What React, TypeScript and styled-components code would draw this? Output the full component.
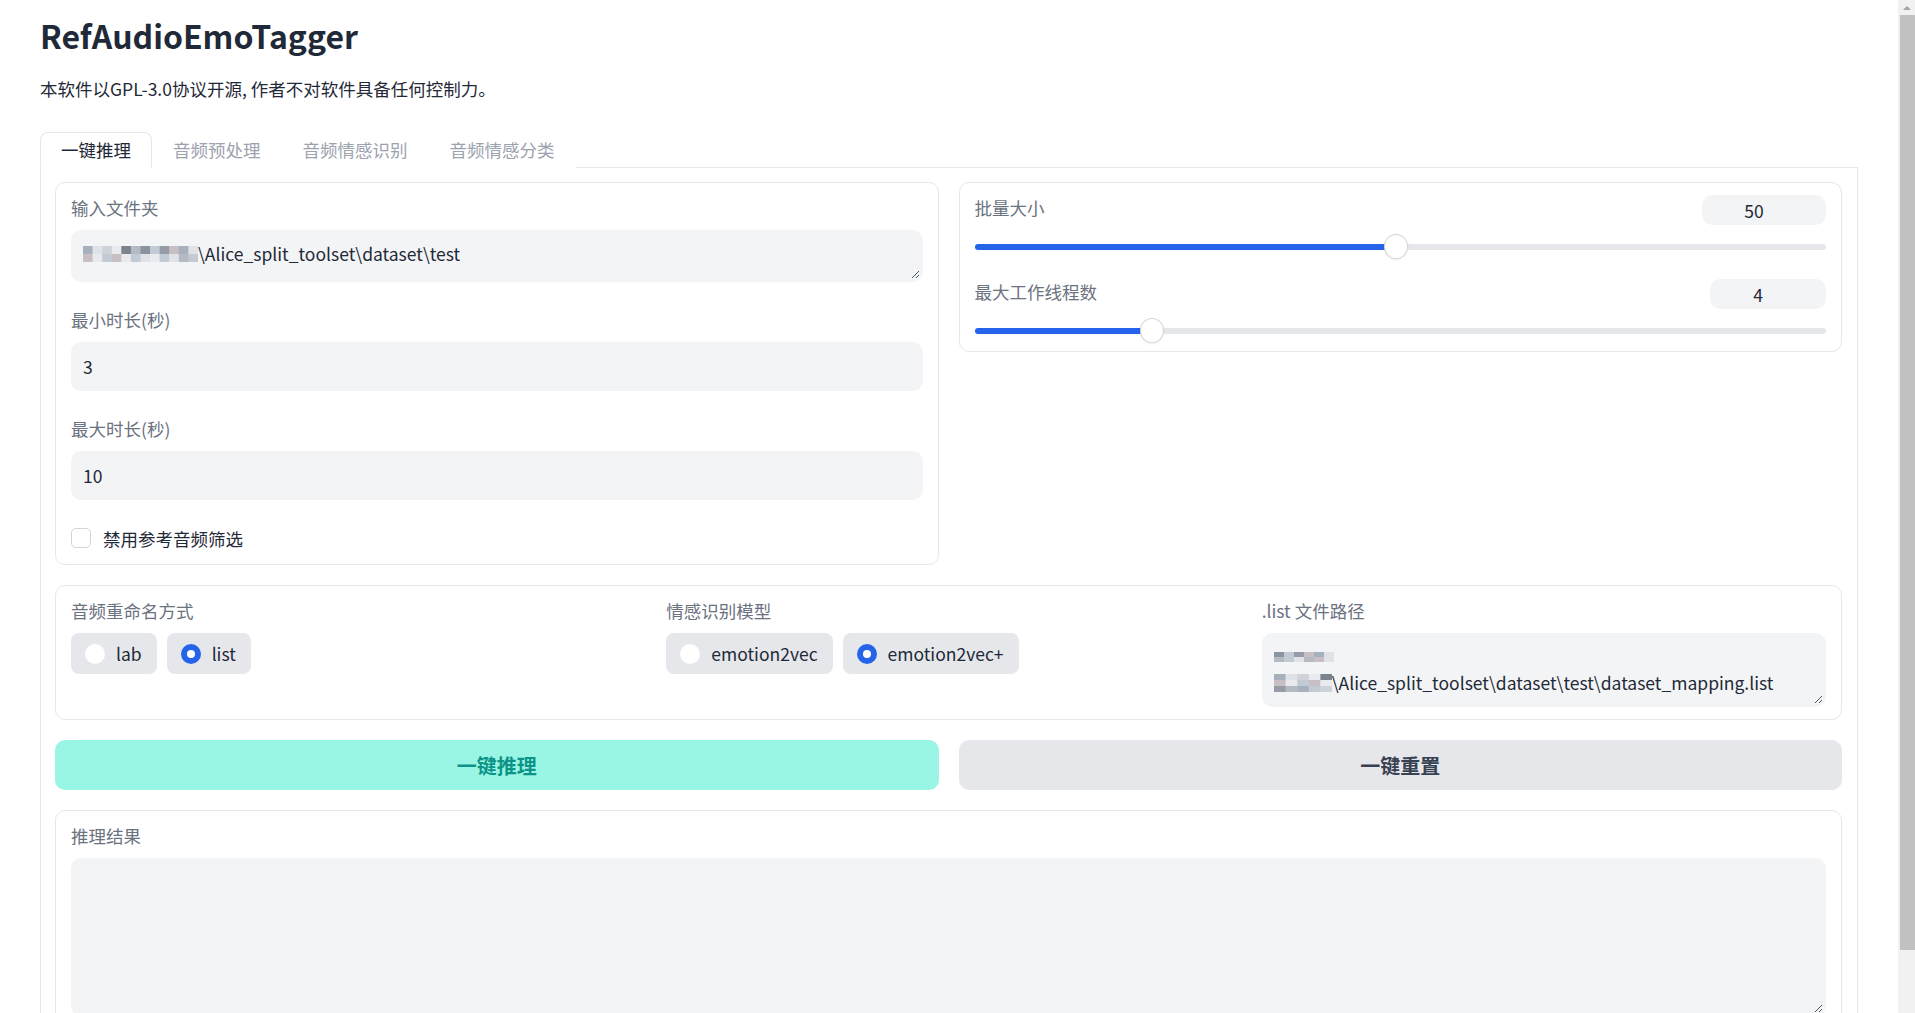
import React from 'react';
import styled, { createGlobalStyle } from 'styled-components';

const GlobalStyle = createGlobalStyle`
  * { box-sizing: border-box; }
  html, body { margin: 0; height: 100%; overflow: hidden; }
  body {
    background: #ffffff;
    color: #1f2937;
    font-family: "Noto Sans CJK SC", "Noto Sans", sans-serif;
  }
`;

const Shell = styled.div`
  display: flex;
  height: 100vh;
  overflow: hidden;
`;

const Main = styled.div`
  flex: 1;
  min-width: 0;
  overflow: hidden;
`;

const ScrollTrack = styled.div`
  width: 17px;
  flex: none;
  background: #f1f1f1;
  display: flex;
  flex-direction: column;
`;

const ScrollUp = styled.div`
  height: 15px;
  display: flex;
  align-items: center;
  justify-content: center;
`;

const ScrollThumb = styled.div`
  height: 935px;
  margin-left: 2px;
  background: #c1c1c1;
`;

const Page = styled.div`
  padding: 0 40px 24px;
`;

const Title = styled.h1`
  margin: 15px 0 0;
  font-size: 32px;
  line-height: 40px;
  font-weight: 700;
  color: #1f2937;
`;

const Subtitle = styled.p`
  margin: 21px 0 0;
  font-size: 17.5px;
  line-height: 26px;
  color: #1f2937;
`;

const TabNav = styled.div`
  margin-top: 30px;
  display: flex;
  border-bottom: 1px solid #e5e7eb;
`;

const Tab = styled.button<{ $active?: boolean }>`
  height: 36px;
  padding: 0 20px;
  margin-bottom: -1px;
  font-family: inherit;
  font-size: 17.5px;
  line-height: 26px;
  background: #ffffff;
  color: ${(p) => (p.$active ? '#1f2937' : '#9ca3af')};
  border: 1px solid ${(p) => (p.$active ? '#e5e7eb' : 'transparent')};
  border-bottom-color: ${(p) => (p.$active ? '#ffffff' : 'transparent')};
  border-radius: 8px 8px 0 0;
  cursor: pointer;
`;

const TabPanel = styled.div`
  border: 1px solid #e5e7eb;
  border-top: none;
  padding: 14px 15px 14px 14px;
  display: flex;
  flex-direction: column;
  gap: 20px;
`;

const TwoCols = styled.div`
  display: grid;
  grid-template-columns: 1fr 1fr;
  gap: 20px;
  align-items: start;
`;

const Card = styled.div<{ $pb?: number }>`
  border: 1px solid #e5e7eb;
  border-radius: 10px;
  padding: 12px 15px ${(p) => p.$pb ?? 12}px;
  display: flex;
  flex-direction: column;
  background: #ffffff;
`;

const Stack = styled.div<{ $gap: number }>`
  display: flex;
  flex-direction: column;
  gap: ${(p) => p.$gap}px;
`;

const Field = styled.div`
  display: flex;
  flex-direction: column;
  min-width: 0;
`;

const Label = styled.span`
  font-size: 17.5px;
  line-height: 26px;
  color: #6b7280;
  margin-bottom: 9px;
`;

const InputBox = styled.div<{ $h: number }>`
  position: relative;
  height: ${(p) => p.$h}px;
  background: #f3f4f6;
  border-radius: 10px;
  padding: 0 12px;
  display: flex;
  align-items: center;
  font-size: 17.5px;
  line-height: 26px;
  color: #1f2937;
`;

const AreaBox = styled.div<{ $h: number }>`
  position: relative;
  height: ${(p) => p.$h}px;
  background: #f3f4f6;
  border-radius: 10px;
  padding: 11px 12px;
  font-size: 17.5px;
  line-height: 26px;
  color: #1f2937;
  white-space: nowrap;
  overflow: hidden;
`;

const AreaLine = styled.div`
  display: flex;
  align-items: center;
  height: 26px;
`;

const GripMark = styled.svg`
  position: absolute;
  right: 3px;
  bottom: 3px;
`;

const CheckRow = styled.label`
  display: flex;
  align-items: center;
  gap: 12px;
  height: 26px;
  font-size: 17.5px;
  color: #1f2937;
`;

const CheckBox = styled.span`
  width: 20px;
  height: 20px;
  border: 1px solid #d1d5db;
  border-radius: 5px;
  background: #ffffff;
`;

const SliderHead = styled.div`
  display: flex;
  justify-content: space-between;
  align-items: flex-start;
`;

const SliderLabel = styled.span`
  font-size: 17.5px;
  line-height: 26px;
  color: #6b7280;
`;

const SliderNumber = styled.div<{ $w: number }>`
  width: ${(p) => p.$w}px;
  height: 30px;
  background: #f3f4f6;
  border-radius: 10px;
  padding: 0 24px 0 4px;
  display: flex;
  align-items: center;
  justify-content: center;
  font-size: 17.5px;
  color: #1f2937;
`;

const SliderWrap = styled.div`
  position: relative;
  height: 25px;
  margin-top: 9px;
  display: flex;
  align-items: center;
`;

const Rail = styled.div`
  width: 100%;
  height: 6px;
  border-radius: 3px;
  background: #e5e7eb;
  overflow: hidden;
`;

const RailFill = styled.div`
  height: 100%;
  background: #2563eb;
`;

const Thumb = styled.span`
  position: absolute;
  top: 0;
  width: 24px;
  height: 25px;
  margin-left: -12px;
  border-radius: 50%;
  background: #ffffff;
  border: 1px solid #d1d5db;
  box-shadow: 0 1px 2px rgba(0, 0, 0, 0.08);
`;

const ThreeCols = styled.div`
  display: grid;
  grid-template-columns: 1fr 1fr 1fr;
  column-gap: 31px;
`;

const PillRow = styled.div`
  display: flex;
  gap: 10px;
`;

const Pill = styled.label`
  height: 41px;
  padding: 0 15px 0 14px;
  display: flex;
  align-items: center;
  gap: 11px;
  background: #e5e7eb;
  border-radius: 8px;
  font-size: 17.5px;
  color: #1f2937;
`;

const RadioDot = styled.span<{ $on?: boolean }>`
  width: 20px;
  height: 20px;
  border-radius: 50%;
  background: ${(p) => (p.$on ? '#2563eb' : '#ffffff')};
  display: flex;
  align-items: center;
  justify-content: center;
  &::after {
    content: '';
    width: 8px;
    height: 8px;
    border-radius: 50%;
    background: ${(p) => (p.$on ? '#ffffff' : 'transparent')};
  }
`;

const Buttons = styled.div`
  display: grid;
  grid-template-columns: 1fr 1fr;
  gap: 20px;
`;

const ActionButton = styled.button<{ $primary?: boolean }>`
  height: 50px;
  border: none;
  border-radius: 10px;
  font-family: inherit;
  font-size: 20px;
  font-weight: 700;
  background: ${(p) => (p.$primary ? '#99f6e4' : '#e5e7eb')};
  color: ${(p) => (p.$primary ? '#0d9488' : '#374151')};
  cursor: pointer;
`;

const palette = ['#cfd3d9', '#b4b9c2', '#969ca7', '#dfe2e6', '#7d838e', '#c2cad4', '#a7b1bd', '#e8eaed', '#8a94a0', '#c7bfc3'];

function Mosaic({ w, h, cols, rows, seed }: { w: number; h: number; cols: number; rows: number; seed: number }) {
  const cw = w / cols;
  const ch = h / rows;
  const cells: React.ReactNode[] = [];
  for (let r = 0; r < rows; r++) {
    for (let c = 0; c < cols; c++) {
      const idx = (c * 7 + r * 3 + seed * 5 + ((c * r + seed) % 4)) % palette.length;
      cells.push(<rect key={`${r}-${c}`} x={c * cw} y={r * ch} width={cw + 0.5} height={ch + 0.5} fill={palette[idx]} />);
    }
  }
  return (
    <svg width={w} height={h} viewBox={`0 0 ${w} ${h}`} style={{ flex: 'none' }}>
      {cells}
    </svg>
  );
}

function Grip() {
  return (
    <GripMark width="10" height="10" viewBox="0 0 10 10">
      <line x1="9" y1="2" x2="2" y2="9" stroke="#4b5563" strokeWidth="1" />
      <line x1="9" y1="6" x2="6" y2="9" stroke="#4b5563" strokeWidth="1" />
    </GripMark>
  );
}

function Slider({ label, value, min, max, numW }: { label: string; value: number; min: number; max: number; numW: number }) {
  const f = (value - min) / (max - min);
  const pos = `calc(12px + (100% - 24px) * ${f})`;
  return (
    <div>
      <SliderHead>
        <SliderLabel>{label}</SliderLabel>
        <SliderNumber $w={numW}>{value}</SliderNumber>
      </SliderHead>
      <SliderWrap>
        <Rail>
          <RailFill style={{ width: pos }} />
        </Rail>
        <Thumb style={{ left: pos }} />
      </SliderWrap>
    </div>
  );
}

export default function App() {
  return (
    <>
      <GlobalStyle />
      <Shell>
        <Main>
          <Page>
            <Title>RefAudioEmoTagger</Title>
            <Subtitle>本软件以GPL-3.0协议开源, 作者不对软件具备任何控制力。</Subtitle>
            <TabNav>
              <Tab $active>一键推理</Tab>
              <Tab>音频预处理</Tab>
              <Tab>音频情感识别</Tab>
              <Tab>音频情感分类</Tab>
            </TabNav>
            <TabPanel>
              <TwoCols>
                <Card $pb={13}>
                  <Stack $gap={25}>
                    <Field>
                      <Label>输入文件夹</Label>
                      <AreaBox $h={52}>
                        <AreaLine>
                          <Mosaic w={115} h={16} cols={12} rows={2} seed={1} />
                          <span>\Alice_split_toolset\dataset\test</span>
                        </AreaLine>
                        <Grip />
                      </AreaBox>
                    </Field>
                    <Field>
                      <Label>最小时长(秒)</Label>
                      <InputBox $h={49}>3</InputBox>
                    </Field>
                    <Field>
                      <Label>最大时长(秒)</Label>
                      <InputBox $h={49}>10</InputBox>
                    </Field>
                    <CheckRow>
                      <CheckBox />
                      禁用参考音频筛选
                    </CheckRow>
                  </Stack>
                </Card>
                <Card $pb={8}>
                  <Stack $gap={20}>
                    <Slider label="批量大小" value={50} min={1} max={100} numW={124} />
                    <Slider label="最大工作线程数" value={4} min={1} max={16} numW={116} />
                  </Stack>
                </Card>
              </TwoCols>
              <Card $pb={12}>
                <ThreeCols>
                  <Field>
                    <Label>音频重命名方式</Label>
                    <PillRow>
                      <Pill>
                        <RadioDot />
                        lab
                      </Pill>
                      <Pill>
                        <RadioDot $on />
                        list
                      </Pill>
                    </PillRow>
                  </Field>
                  <Field>
                    <Label>情感识别模型</Label>
                    <PillRow>
                      <Pill>
                        <RadioDot />
                        emotion2vec
                      </Pill>
                      <Pill>
                        <RadioDot $on />
                        emotion2vec+
                      </Pill>
                    </PillRow>
                  </Field>
                  <Field>
                    <Label>.list 文件路径</Label>
                    <AreaBox $h={74}>
                      <AreaLine>
                        <Mosaic w={60} h={10} cols={6} rows={2} seed={3} />
                      </AreaLine>
                      <AreaLine>
                        <Mosaic w={58} h={18} cols={5} rows={3} seed={5} />
                        <span>\Alice_split_toolset\dataset\test\dataset_mapping.list</span>
                      </AreaLine>
                      <Grip />
                    </AreaBox>
                  </Field>
                </ThreeCols>
              </Card>
              <Buttons>
                <ActionButton $primary>一键推理</ActionButton>
                <ActionButton>一键重置</ActionButton>
              </Buttons>
              <Card>
                <Field>
                  <Label>推理结果</Label>
                  <AreaBox $h={158}>
                    <Grip />
                  </AreaBox>
                </Field>
              </Card>
            </TabPanel>
          </Page>
        </Main>
        <ScrollTrack>
          <ScrollUp>
            <svg width="8" height="4" viewBox="0 0 8 4">
              <polygon points="4,0 8,4 0,4" fill="#a3a3a3" />
            </svg>
          </ScrollUp>
          <ScrollThumb />
        </ScrollTrack>
      </Shell>
    </>
  );
}
